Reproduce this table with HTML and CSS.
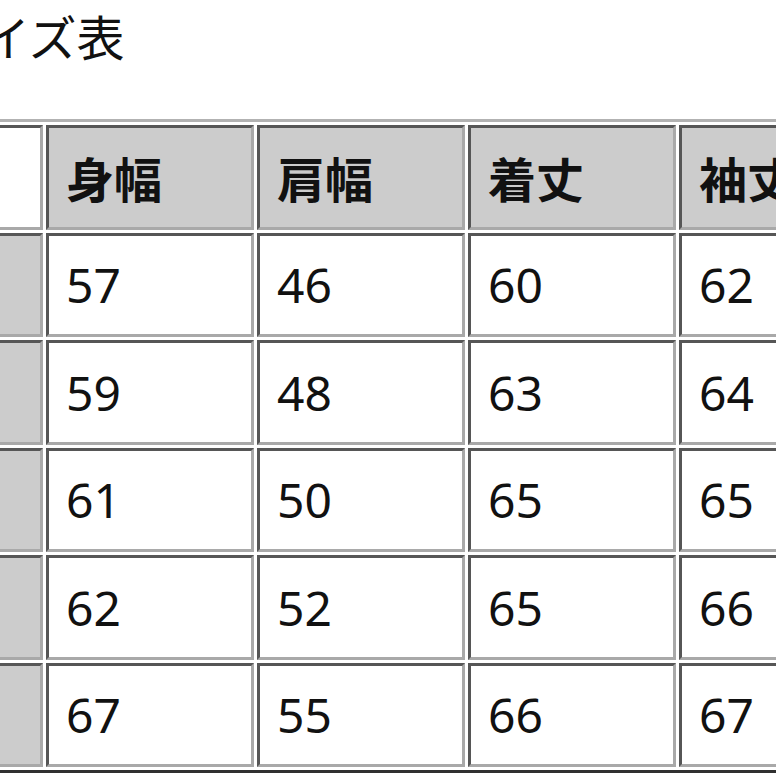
FILE: index.html
```html
<!DOCTYPE html>
<html lang="ja">
<head>
<meta charset="utf-8">
<title>サイズ表</title>
<link rel="stylesheet" href="styles.css">
</head>
<body>
<div class="page">
  <div class="title">サイズ表</div>
  <table class="size-table">
    <tr>
      <td class="corner"></td>
      <th class="col">身幅</th>
      <th class="col">肩幅</th>
      <th class="col">着丈</th>
      <th class="col">袖丈</th>
    </tr>
    <tr><th class="label"></th><td>57</td><td>46</td><td>60</td><td>62</td></tr>
    <tr><th class="label"></th><td>59</td><td>48</td><td>63</td><td>64</td></tr>
    <tr><th class="label"></th><td>61</td><td>50</td><td>65</td><td>65</td></tr>
    <tr><th class="label"></th><td>62</td><td>52</td><td>65</td><td>66</td></tr>
    <tr><th class="label"></th><td>67</td><td>55</td><td>66</td><td>67</td></tr>
  </table>
</div>
</body>
</html>
```
FILE: styles.css
```css
html, body {
  margin: 0;
  padding: 0;
  background: #ffffff;
  overflow: hidden;
}

.page {
  margin-left: -66px;
  color: #111111;
  font-family: "Noto Sans", "Noto Sans CJK JP", sans-serif;
}

.title {
  font-family: "Noto Sans CJK JP", sans-serif;
  font-size: 48px;
  font-weight: 400;
  line-height: 70px;
  margin: 0 0 49px 0;
  white-space: nowrap;
}

.size-table {
  table-layout: fixed;
  width: 959px;
  border-collapse: separate;
  border-spacing: 3px;
  border: 3px solid;
  border-color: #b2b2b2 #303030 #303030 #b2b2b2;
  font-size: 48px;
}

.size-table th,
.size-table td {
  border: 3px solid;
  border-color: #565656 #a9a9a9 #a9a9a9 #565656;
  padding: 0 17px;
  height: 98.5px;
  text-align: left;
  vertical-align: middle;
  white-space: nowrap;
  width: 168px;
}

.size-table .corner,
.size-table .label {
  width: 63px;
}

.size-table .corner {
  background: #ffffff;
}

.size-table th {
  background: #cccccc;
  font-weight: 700;
  font-family: "Noto Sans CJK JP", sans-serif;
}

.size-table td {
  background: #ffffff;
  font-weight: 400;
}
```
